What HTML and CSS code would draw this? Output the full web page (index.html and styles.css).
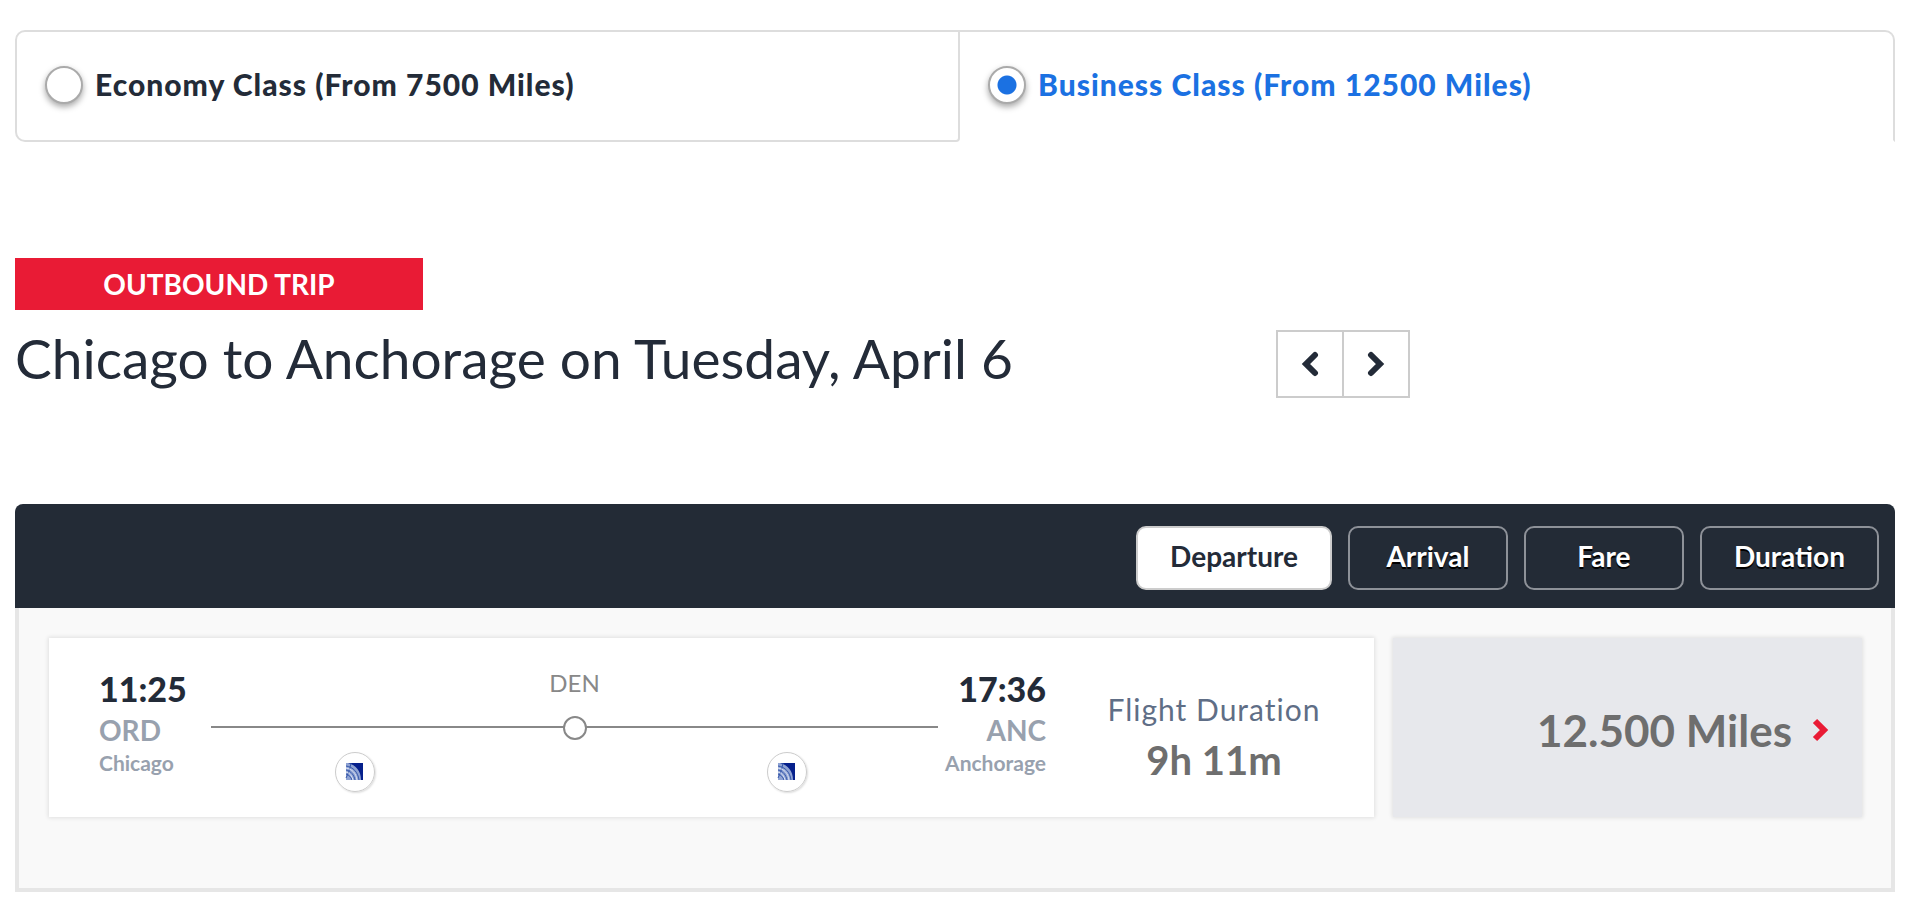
FILE: index.html
```html
<!DOCTYPE html>
<html lang="en">
<head>
  <meta charset="UTF-8" />
  <meta name="viewport" content="width=device-width, initial-scale=1.0" />
  <title>Select flight</title>
  <link rel="stylesheet" href="styles.css">
</head>
<body>
  <svg class="sprite" aria-hidden="true">
    <symbol id="airline" viewBox="0 0 20 20">
      <rect x="1" y="1" width="17" height="17" fill="#8fa3d3" />
      <path d="M3 1h15v17h-2C16 9 11 3 3 1z" fill="#06208c" />
      <path d="M1 4c7 1 12 6 13 14M1 8c5 1 8 5 9 10M1 12c3 1 5 3 6 6M6 1c-1 6-3 11-5 15" fill="none" stroke="#3557ab" stroke-width="1" />
      <path d="M1 6c6 1 10 5 11 12M1 10c4 1 6 4 7 8" fill="none" stroke="#dde4f4" stroke-width="1" />
    </symbol>
  </svg>

  <main>
    <div class="cabins">
      <label class="cabin">
        <input type="radio" name="cabin" value="economy">
        <span>Economy Class (From 7500 Miles)</span>
      </label>
      <label class="cabin active">
        <input type="radio" name="cabin" value="business" checked>
        <span>Business Class (From 12500 Miles)</span>
      </label>
    </div>

    <p class="trip-label">OUTBOUND TRIP</p>
    <div class="trip-head">
      <h1>Chicago to Anchorage on Tuesday, April 6</h1>
      <div class="day-nav">
        <button type="button" aria-label="Previous day">
          <svg width="18" height="28" viewBox="0 0 18 28"><path d="M14 5L5 14l9 9" /></svg>
        </button>
        <button type="button" aria-label="Next day">
          <svg width="18" height="28" viewBox="0 0 18 28"><path d="M4 5l9 9-9 9" /></svg>
        </button>
      </div>
    </div>

    <section class="flights">
      <div class="sort-bar">
        <button type="button" class="selected">Departure</button>
        <button type="button">Arrival</button>
        <button type="button">Fare</button>
        <button type="button">Duration</button>
      </div>
      <div class="flight-list">
        <div class="flight">
          <div class="info">
            <div class="airport">
              <span class="time">11:25</span>
              <span class="code">ORD</span>
              <span class="city">Chicago</span>
            </div>
            <div class="route">
              <span class="via">DEN</span>
              <div class="line"><span class="stop"></span></div>
              <div class="carriers">
                <span class="carrier"><svg width="20" height="20"><use href="#airline" /></svg></span>
                <span class="carrier"><svg width="20" height="20"><use href="#airline" /></svg></span>
              </div>
            </div>
            <div class="airport arrive">
              <span class="time">17:36</span>
              <span class="code">ANC</span>
              <span class="city">Anchorage</span>
            </div>
            <div class="duration">
              <span class="duration-label">Flight Duration</span>
              <span class="duration-value">9h 11m</span>
            </div>
          </div>
          <button type="button" class="price">
            <span>12.500 Miles</span>
            <svg width="18" height="28" viewBox="0 0 18 28"><path d="M3 5l9 9-9 9" /></svg>
          </button>
        </div>
      </div>
    </section>
  </main>
</body>
</html>
```
FILE: styles.css
```css
* {
  box-sizing: border-box;
  margin: 0;
  padding: 0;
}
body {
  background-color: #fff;
  color: #232b38;
  font-family: Lato, "Open Sans", sans-serif;
}
main {
  padding: 30px 11px 10px 15px;
}
button {
  font-family: inherit;
  cursor: pointer;
}
svg {
  display: block;
}
.sprite {
  position: absolute;
  width: 0;
  height: 0;
}

/* cabin tabs */
.cabins {
  display: grid;
  grid-template-columns: 945fr 935fr;
}
.cabin {
  display: flex;
  align-items: center;
  gap: 12px;
  height: 112px;
  padding: 0 28px 2px;
  border: 2px solid #ddd;
  border-radius: 10px 0 4px 10px;
  font-size: 30px;
  font-weight: 900;
  letter-spacing: 1px;
  cursor: pointer;
}
.cabin.active {
  border-left: 0;
  border-bottom-color: transparent;
  border-radius: 0 10px 0 0;
  color: #1b71e2;
}
.cabin input {
  appearance: none;
  width: 38px;
  height: 38px;
  border: 2px solid #aaa;
  border-radius: 50%;
  background-color: #fff;
  box-shadow: 0 3px 6px rgba(0, 0, 0, 0.35);
}
.cabin input:checked {
  background-image: radial-gradient(circle, #1b71e2 9px, transparent 10px);
}
.cabin span {
  padding-bottom: 2px;
}

/* trip heading */
.trip-label {
  width: 408px;
  margin-top: 116px;
  background-color: #e91b35;
  color: #fff;
  font-size: 28px;
  font-weight: 700;
  line-height: 52px;
  text-align: center;
}
.trip-head {
  display: flex;
  align-items: flex-end;
  justify-content: space-between;
  width: 74.2%;
  margin-top: 12px;
}
.trip-head h1 {
  padding-bottom: 4px;
  font-size: 55px;
  font-weight: 400;
  line-height: 72px;
}
.day-nav {
  display: flex;
}
.day-nav button {
  display: flex;
  align-items: center;
  justify-content: center;
  width: 68px;
  height: 68px;
  border: 2px solid #ccc;
  background-color: #fff;
}
.day-nav button + button {
  margin-left: -2px;
}
.day-nav path,
.price path {
  fill: none;
  stroke: #232b38;
  stroke-width: 6;
  stroke-linecap: round;
}

/* flights */
.flights {
  margin-top: 106px;
}
.sort-bar {
  display: flex;
  align-items: center;
  justify-content: flex-end;
  gap: 16px;
  height: 104px;
  padding: 4px 16px 0;
  border-radius: 8px 8px 0 0;
  background-color: #232b36;
}
.sort-bar button {
  min-width: 160px;
  height: 64px;
  padding: 0 32px 4px;
  border: 2px solid #8d9198;
  border-radius: 10px;
  background-color: transparent;
  color: #fff;
  font-size: 28px;
  font-weight: 700;
  text-shadow: 0 2px 0 #000;
}
.sort-bar .selected {
  border-color: #ccc;
  background-color: #fff;
  color: #232b38;
  text-shadow: none;
}
.flight-list {
  padding: 30px 29px 71px 30px;
  border: 4px solid #e6e6e6;
  border-top: 0;
  background-color: #f9f9f9;
}
.flight {
  display: grid;
  grid-template-columns: 1325fr 469fr;
  gap: 19px;
}
.info,
.price {
  height: 179px;
  box-shadow: 0 0 4px 1px rgba(0, 0, 0, 0.1);
}
.info {
  display: flex;
  padding: 30px 50px 0;
  background-color: #fff;
}
.airport {
  display: flex;
  flex-direction: column;
  width: 112px;
  font-weight: 700;
}
.arrive {
  align-items: flex-end;
  width: 108px;
}
.time {
  font-size: 34px;
  font-weight: 900;
  line-height: 42px;
}
.code {
  color: #98a1ae;
  font-size: 28px;
  line-height: 40px;
}
.city {
  color: #98a1ae;
  font-size: 21px;
  line-height: 26px;
}
.route {
  flex: 1;
  text-align: center;
}
.via {
  display: block;
  color: #888;
  font-size: 24px;
  line-height: 30px;
}
.line {
  display: flex;
  justify-content: center;
  height: 2px;
  margin-top: 28px;
  background-color: #888;
}
.stop {
  width: 24px;
  height: 24px;
  margin-top: -10px;
  border: 2px solid #888;
  border-radius: 50%;
  background-color: #fff;
}
.carriers {
  display: flex;
  justify-content: space-between;
  padding: 24px 18% 0 17%;
}
.carrier {
  display: flex;
  align-items: center;
  justify-content: center;
  width: 40px;
  height: 40px;
  border: 1px solid #ccc;
  border-radius: 50%;
  box-shadow: 1px 1px 2px #ddd;
}
.duration {
  display: flex;
  flex-direction: column;
  align-items: center;
  width: 220px;
  margin-left: 58px;
  padding-top: 20px;
}
.duration-label {
  color: #5f6e86;
  font-size: 30px;
  letter-spacing: 1px;
  line-height: 42px;
  white-space: nowrap;
}
.duration-value {
  color: #6e6e6e;
  font-size: 40px;
  font-weight: 700;
  line-height: 60px;
}
.price {
  display: flex;
  align-items: center;
  justify-content: flex-end;
  gap: 20px;
  padding: 4px 32px 0 0;
  border: 0;
  background-color: #e7e8ec;
  color: #6e6e6e;
  font-size: 44px;
  font-weight: 700;
}
.price path {
  stroke: #e91b35;
  stroke-linecap: butt;
}
```
